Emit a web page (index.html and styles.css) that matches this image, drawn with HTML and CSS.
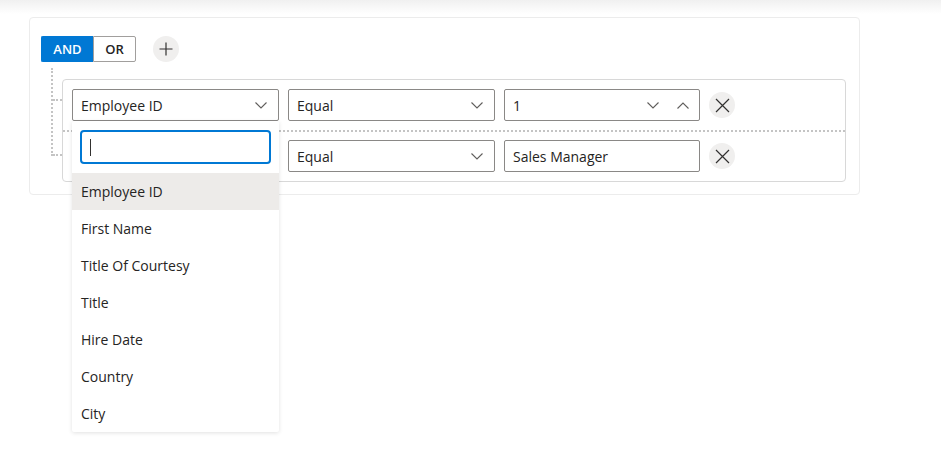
FILE: index.html
```html
<!DOCTYPE html>
<html lang="en">
<head>
<meta charset="utf-8">
<title>Query Builder</title>
<link rel="stylesheet" href="styles.css">
</head>
<body>
<div class="qb">
  <div class="qb-header">
    <div class="toggle">
      <button class="tg tg-active">AND</button>
      <button class="tg">OR</button>
    </div>
    <button class="round-btn add-btn" aria-label="Add">
      <svg width="14" height="14" viewBox="0 0 14 14"><path d="M7 0.5V13.5M0.5 7H13.5" stroke="#323130" stroke-width="1.2" fill="none"/></svg>
    </button>
  </div>
  <div class="qb-body">
    <div class="conn conn-v"></div>
    <div class="conn conn-h1"></div>
    <div class="conn conn-h2"></div>
    <div class="rules">
      <div class="rule">
        <div class="dd dd-field"><span>Employee ID</span>
          <svg class="chev" width="12" height="7" viewBox="0 0 12 7"><path d="M0.5 0.5L6 6L11.5 0.5" stroke="#605e5c" stroke-width="1.1" fill="none"/></svg>
        </div>
        <div class="dd dd-op"><span>Equal</span>
          <svg class="chev" width="12" height="7" viewBox="0 0 12 7"><path d="M0.5 0.5L6 6L11.5 0.5" stroke="#605e5c" stroke-width="1.1" fill="none"/></svg>
        </div>
        <div class="dd dd-val"><span>1</span>
          <span class="spin">
            <svg width="12" height="7" viewBox="0 0 12 7"><path d="M0.5 0.5L6 6L11.5 0.5" stroke="#605e5c" stroke-width="1.1" fill="none"/></svg>
            <svg width="12" height="7" viewBox="0 0 12 7"><path d="M0.5 6.5L6 1L11.5 6.5" stroke="#605e5c" stroke-width="1.1" fill="none"/></svg>
          </span>
        </div>
        <button class="round-btn del-btn" aria-label="Delete">
          <svg width="15" height="15" viewBox="0 0 15 15"><path d="M1 1L14 14M14 1L1 14" stroke="#323130" stroke-width="1.2" fill="none"/></svg>
        </button>
      </div>
      <div class="rule rule-sep">
        <div class="dd dd-field"><span></span></div>
        <div class="dd dd-op"><span>Equal</span>
          <svg class="chev" width="12" height="7" viewBox="0 0 12 7"><path d="M0.5 0.5L6 6L11.5 0.5" stroke="#605e5c" stroke-width="1.1" fill="none"/></svg>
        </div>
        <div class="dd dd-val"><span>Sales Manager</span></div>
        <button class="round-btn del-btn" aria-label="Delete">
          <svg width="15" height="15" viewBox="0 0 15 15"><path d="M1 1L14 14M14 1L1 14" stroke="#323130" stroke-width="1.2" fill="none"/></svg>
        </button>
      </div>
      <div class="popup">
        <div class="search"><span class="caret"></span></div>
        <ul class="list">
          <li class="item item-active">Employee ID</li>
          <li class="item">First Name</li>
          <li class="item">Title Of Courtesy</li>
          <li class="item">Title</li>
          <li class="item">Hire Date</li>
          <li class="item">Country</li>
          <li class="item">City</li>
        </ul>
      </div>
    </div>
  </div>
</div>
</body>
</html>
```
FILE: styles.css
```css
* { box-sizing: border-box; }
html, body { margin: 0; }
html { min-height: 100%; background: #fff; }
body {
  min-height: 475px;
  font-family: "Open Sans", "Noto Sans", sans-serif;
  color: #252423;
  background: linear-gradient(#f0f0f0 0, #ffffff 14px) no-repeat #fff;
  padding: 17px 0 0 29px;
}
.qb {
  width: 831px;
  border: 1px solid #ececec;
  border-radius: 4px;
  padding: 18px 13px 12px 11px;
}
.qb-header {
  display: flex;
  align-items: center;
  gap: 17px;
  height: 26px;
}
.toggle { display: flex; }
.tg {
  height: 26px;
  font-family: inherit;
  font-size: 13px;
  font-weight: 600;
  color: #252423;
  background: #fff;
  border: 1px solid #a19f9d;
  padding: 0;
  cursor: pointer;
}
.tg:first-child { width: 52px; border-radius: 2px 0 0 2px; border-right: none; }
.tg:last-child { width: 43px; border-radius: 0 2px 2px 0; }
.tg-active { background: #0078d4; border-color: #0078d4; color: #fff; }
.round-btn {
  width: 26px;
  height: 26px;
  border-radius: 50%;
  border: none;
  background: #f0efee;
  display: flex;
  align-items: center;
  justify-content: center;
  padding: 0;
  flex: none;
}
.qb-body {
  position: relative;
  padding: 17px 0 0 21px;
}
.conn { position: absolute; border-color: #c4c4c4; border-style: dotted; border-width: 0; }
.conn-v { left: 10px; top: 6px; height: 88px; border-left-width: 2px; }
.conn-h1 { left: 12px; top: 37px; width: 9px; border-top-width: 2px; }
.conn-h2 { left: 12px; top: 92px; width: 9px; border-top-width: 2px; }
.rules {
  position: relative;
  border: 1px solid #d8d8d8;
  border-radius: 4px;
}
.rule {
  display: flex;
  align-items: center;
  gap: 9px;
  padding: 9px 9px;
}
.rule-sep {
  border-top: 2px dotted #c4c4c4;
  padding: 8px 9px 9px;
}
.dd {
  height: 32px;
  border: 1px solid #8a8886;
  border-radius: 2px;
  display: flex;
  align-items: center;
  justify-content: space-between;
  padding: 0 11px 0 8px;
  font-size: 14px;
  background: #fff;
}
.dd-field { width: 207px; }
.dd-op { width: 207px; }
.dd-val { width: 196px; padding-right: 10px; }
.spin { display: flex; gap: 18px; }
.popup {
  position: absolute;
  left: 9px;
  top: 41px;
  width: 207px;
  height: 311px;
  background: #fff;
  border-radius: 2px;
  box-shadow: 0 1px 4px rgba(0, 0, 0, 0.12);
  padding: 9px 8px 0 8px;
  z-index: 2;
}
.search {
  height: 34px;
  border: 2px solid #0078d4;
  border-radius: 4px;
  display: flex;
  align-items: center;
  padding-left: 8px;
}
.caret { width: 1px; height: 17px; background: #323130; }
.list {
  list-style: none;
  margin: 9px -8px 0 -8px;
  padding: 0;
}
.item {
  height: 37px;
  display: flex;
  align-items: center;
  padding-left: 9px;
  font-size: 14px;
}
.item-active { background: #edebe9; }
```
